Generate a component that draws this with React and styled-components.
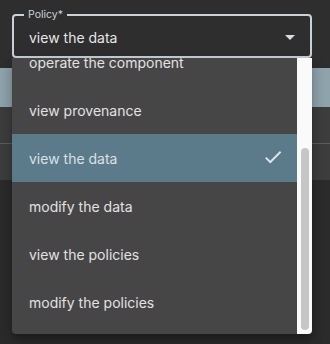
import React from "react";
import styled, { createGlobalStyle } from "styled-components";

const Global = createGlobalStyle`
  html, body { margin: 0; padding: 0; background: #2e2e2e; }
  body { font-family: Inter, "Noto Sans", sans-serif; }
  * { box-sizing: border-box; }
`;

const Page = styled.div`
  position: relative;
  width: 330px;
  height: 344px;
  overflow: hidden;
  background: #2e2e2e;
`;

const FieldArea = styled.div`
  height: 68px;
  padding: 14px 18px 0 12px;
`;

const Field = styled.fieldset`
  position: relative;
  margin: 0;
  height: 44px;
  border: 2px solid #c7d3d9;
  border-radius: 4px;
  padding: 0 8px 0 15px;
  display: flex;
  align-items: center;
  justify-content: space-between;
`;

const Legend = styled.legend`
  position: absolute;
  top: -8px;
  left: 10px;
  padding: 0 4px 0 4px;
  background: #2e2e2e;
  font-size: 10.5px;
  line-height: 14px;
  color: #c7d3d9;
`;

const Value = styled.span`
  font-size: 14px;
  color: #e6e6e6;
  margin-top: 2px;
`;

const Band = styled.div`
  height: ${(p) => p.$h}px;
  background: ${(p) => p.$bg};
  border-bottom: ${(p) => (p.$line ? "1px solid #5c5c5c" : "none")};
`;

const Menu = styled.div`
  position: absolute;
  top: 58px;
  left: 12px;
  width: 300px;
  height: 276px;
  display: flex;
  background: #464646;
  border-radius: 0 0 4px 4px;
  overflow: hidden;
  box-shadow: 0 5px 5px -3px rgba(0,0,0,0.2), 0 8px 10px 1px rgba(0,0,0,0.14), 0 3px 14px 2px rgba(0,0,0,0.12);
`;

const ListViewport = styled.div`
  flex: 1;
  overflow: hidden;
`;

const List = styled.ul`
  list-style: none;
  margin: -20px 0 0 0;
  padding: 0 0 8px 0;
`;

const Item = styled.li`
  height: 48px;
  display: flex;
  align-items: center;
  justify-content: space-between;
  padding: 0 13px 0 17px;
  font-size: 14px;
  color: ${(p) => (p.$selected ? "#d9e1e5" : "#e2e2e2")};
  background: ${(p) => (p.$selected ? "#5b7b8a" : "transparent")};
`;

const Track = styled.div`
  width: 15px;
  background: #fafafa;
  padding: 90px 3px 4px 4px;
  display: flex;
`;

const Thumb = styled.div`
  flex: 1;
  background: #c6c6c6;
  border-radius: 4px;
`;

const Caret = () => (
  <svg width="24" height="24" viewBox="0 0 24 24" style={{ marginTop: 1 }}>
    <path d="M7 10l5 5 5-5z" fill="#d3dde2" />
  </svg>
);

const Check = () => (
  <svg width="22" height="22" viewBox="0 0 24 24" style={{ marginTop: -2 }}>
    <path d="M9 16.17 4.83 12l-1.42 1.41L9 19 21 7l-1.41-1.41z" fill="#dfe6ea" />
  </svg>
);

const items = [
  "operate the component",
  "view provenance",
  "view the data",
  "modify the data",
  "view the policies",
  "modify the policies",
];

export default function App() {
  return (
    <Page>
      <Global />
      <FieldArea>
        <Field>
          <Legend>Policy*</Legend>
          <Value>view the data</Value>
          <Caret />
        </Field>
      </FieldArea>
      <Band $h={39} $bg="#8fa3ad" />
      <Band $h={37} $bg="#3d3d3d" $line />
      <Band $h={36} $bg="#3d3d3d" />
      <Band $h={164} $bg="#2b2b2b" />
      <Menu>
        <ListViewport>
          <List>
            {items.map((t) => (
              <Item key={t} $selected={t === "view the data"}>
                <span>{t}</span>
                {t === "view the data" && <Check />}
              </Item>
            ))}
          </List>
        </ListViewport>
        <Track>
          <Thumb />
        </Track>
      </Menu>
    </Page>
  );
}
